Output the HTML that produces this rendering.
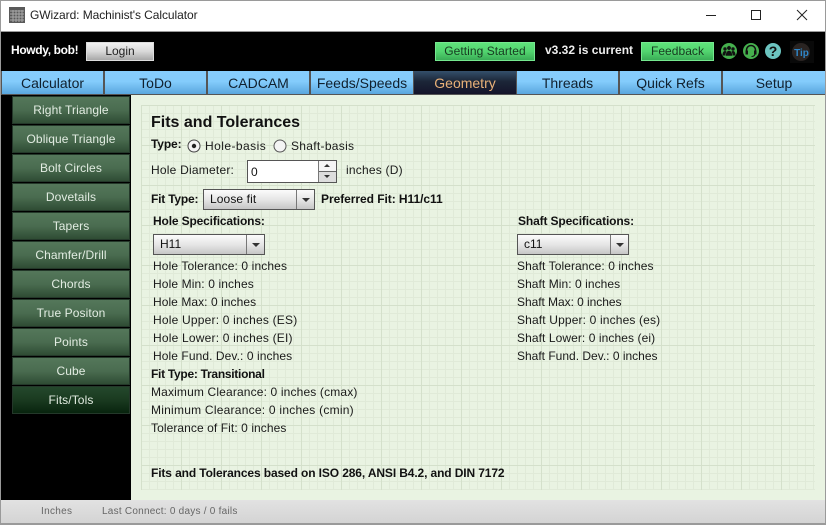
<!DOCTYPE html>
<html><head><meta charset="utf-8"><style>
*{box-sizing:border-box}
html,body{margin:0;padding:0;width:826px;height:525px;overflow:hidden;background:#fff;font-family:"Liberation Sans",sans-serif;font-size:12px;color:#111}
.a{position:absolute;white-space:nowrap}
.t{position:absolute;white-space:nowrap;line-height:14px;height:14px;color:#1a1a1a;letter-spacing:.12px}
.t.b{font-weight:bold;color:#111;letter-spacing:-.13px}
.tab{position:absolute;top:71px;height:23px;background:linear-gradient(#86cdfd,#84ccfc 45%,#5aa6de);color:#10202e;font-size:14px;line-height:24px;text-align:center}
.side{position:absolute;left:12px;width:118px;height:28px;background:linear-gradient(#54775a,#4a6c50 50%,#2f4c34);border:1px solid #24382a;color:#e2ece2;font-size:12px;line-height:27px;text-align:center;letter-spacing:.1px}
.sel{position:absolute;background:linear-gradient(#fbfbfb,#e6e6e6 50%,#c6c6c6);border:1px solid #555;height:21px;font-size:12px;line-height:19px;padding-left:6px}
.sel i{position:absolute;right:0;top:0;bottom:0;width:18px;border-left:1px solid #777}
.sel i:after{content:"";position:absolute;left:5px;top:8px;border:4px solid transparent;border-top:4px solid #333;border-bottom:0}
.btn{position:absolute;top:42px;height:19px;background:linear-gradient(#5fe37b,#52d46f 50%,#3aad56);border:1px solid #75e88f;color:#173a20;text-align:center;line-height:17px;font-size:12px;letter-spacing:.05px}
</style></head><body>
<div class="a" style="left:0;top:0;width:826px;height:525px;border:1px solid #9a9a9a;border-bottom:0;z-index:9;pointer-events:none"></div>
<svg class="a" style="left:9px;top:7px" width="16" height="16"><rect width="16" height="16" fill="#5a5a5a"/><path d="M1 4h14M1 7h14M1 10h14M1 13h14M4 3v12M7 3v12M10 3v12M13 3v12" stroke="#a9a9a9" stroke-width="1"/></svg>
<div class="a" style="left:30px;top:8px;font-size:12px;line-height:15px;color:#222;letter-spacing:-.07px">GWizard: Machinist's Calculator</div>
<svg class="a" style="left:700px;top:8px" width="110" height="15" fill="none" stroke="#222" stroke-width="1"><path d="M6 7.500h10"/><rect x="51.500" y="2.500" width="9" height="9"/><path d="M97 2l10 10M107 2l-10 10"/></svg>
<div class="a" style="left:1px;top:31px;width:824px;height:1px;background:#9a9a9a"></div>
<div class="a" style="left:1px;top:32px;width:824px;height:39px;background:#000"></div>
<div class="a" style="left:11px;top:43px;color:#fff;font-weight:bold;font-size:12px;line-height:14px;letter-spacing:-.35px">Howdy, bob!</div>
<div class="a" style="left:86px;top:42px;width:68px;height:19px;background:linear-gradient(#f0f0f0,#d8d8d8 50%,#a8a8a8);border:1px solid #ddd;color:#222;text-align:center;line-height:17px">Login</div>
<div class="btn" style="left:435px;width:100px">Getting Started</div>
<div class="a" style="left:545px;top:43px;color:#eee;font-weight:bold;line-height:14px">v3.32 is current</div>
<div class="btn" style="left:641px;width:73px">Feedback</div>
<svg class="a" style="left:720px;top:41px" width="95" height="22">
<circle cx="9" cy="10" r="8" fill="#46b04e"/><circle cx="5" cy="8" r="1.700" fill="#111"/><circle cx="13" cy="8" r="1.700" fill="#111"/><path d="M2.500 14.500c0-3 1-4.500 2.500-4.500s2.500 1.500 2.500 4.500zM10.500 14.500c0-3 1-4.500 2.500-4.500s2.500 1.500 2.500 4.500z" fill="#111"/><circle cx="9" cy="7" r="2.200" fill="#111" stroke="#46b04e" stroke-width=".5"/><path d="M5.500 15c0-3 1.500-5.500 3.500-5.500s3.500 2.500 3.500 5.500z" fill="#111" stroke="#46b04e" stroke-width=".5"/>
<circle cx="31" cy="10" r="8" fill="#46b04e"/><path d="M26.500 11v-2a4.500 4.500 0 0 1 9 0v2" stroke="#111" stroke-width="1.500" fill="none"/><rect x="25.500" y="9.500" width="2.500" height="4" fill="#111"/><rect x="34" y="9.500" width="2.500" height="4" fill="#111"/><path d="M35 13.500q-1 2-3.500 2" stroke="#111" fill="none"/>
<circle cx="53" cy="10" r="8" fill="#6cc4c0"/><text x="53" y="15" font-family="Liberation Sans" font-size="14" font-weight="bold" fill="#111" text-anchor="middle">?</text>
<rect x="70" y="0" width="24" height="22" fill="#090909"/><circle cx="81" cy="11" r="9" fill="#2a2422"/><text x="81.500" y="15" font-family="Liberation Sans" font-size="10" font-weight="bold" fill="#2f86c8" text-anchor="middle">Tip</text>
</svg>
<div class="a" style="left:1px;top:71px;width:824px;height:24px;background:#555"></div>
<div class="tab" style="left:2px;width:101px">Calculator</div>
<div class="tab" style="left:105px;width:101px">ToDo</div>
<div class="tab" style="left:208px;width:101px">CADCAM</div>
<div class="tab" style="left:311px;width:102px">Feeds/Speeds</div>
<div class="tab" style="left:414px;width:102px;background:linear-gradient(#34506c,#1c2638 45%,#14142a);color:#e8b078">Geometry</div>
<div class="tab" style="left:517px;width:101px">Threads</div>
<div class="tab" style="left:620px;width:101px">Quick Refs</div>
<div class="tab" style="left:723px;width:102px">Setup</div>
<div class="a" style="left:1px;top:95px;width:130px;height:405px;background:#000"></div>
<div class="a" style="left:131px;top:95px;width:694px;height:405px;background:#e9f3e2"></div>
<div class="side" style="top:96px">Right Triangle</div>
<div class="side" style="top:125px">Oblique Triangle</div>
<div class="side" style="top:154px">Bolt Circles</div>
<div class="side" style="top:183px">Dovetails</div>
<div class="side" style="top:212px">Tapers</div>
<div class="side" style="top:241px">Chamfer/Drill</div>
<div class="side" style="top:270px">Chords</div>
<div class="side" style="top:299px">True Positon</div>
<div class="side" style="top:328px">Points</div>
<div class="side" style="top:357px">Cube</div>
<div class="side" style="top:386px;background:linear-gradient(#24482c,#1a3a20 50%,#08240e)">Fits/Tols</div>
<div class="a" style="left:141px;top:105px;width:674px;height:385px;background-image:linear-gradient(90deg,#d4e0cb 1px,transparent 1px),linear-gradient(#d4e0cb 1px,transparent 1px),linear-gradient(90deg,#e0ead8 1px,transparent 1px),linear-gradient(#e0ead8 1px,transparent 1px);background-size:40px 40px,40px 40px,8px 8px,8px 8px"></div>
<div class="a" style="left:151px;top:114px;font-size:16px;line-height:18px;font-weight:bold;color:#111">Fits and Tolerances</div>
<div class="t b" style="left:151px;top:137px">Type:</div>
<svg class="a" style="left:187px;top:139px" width="100" height="14"><circle cx="7" cy="7" r="6" fill="#f4f4f4" stroke="#444"/><circle cx="7" cy="7" r="2.200" fill="#222"/><circle cx="93" cy="7" r="6" fill="#f4f4f4" stroke="#555"/></svg>
<div class="t" style="left:205px;top:139px;letter-spacing:.45px">Hole-basis</div>
<div class="t" style="left:291px;top:139px;letter-spacing:.3px">Shaft-basis</div>
<div class="t" style="left:151px;top:163px;letter-spacing:.22px">Hole Diameter:</div>
<div class="a" style="left:247px;top:160px;width:90px;height:23px;background:#fff;border:1px solid #555;line-height:22px;padding-left:3px">0<div style="position:absolute;right:0;top:0;width:18px;height:21px;border-left:1px solid #777;background:linear-gradient(#f4f4f4 48%,#666 48%,#666 52%,#ddd 52%)"><div style="position:absolute;left:5px;top:3px;border:3.500px solid transparent;border-bottom:3.500px solid #333;border-top:0"></div><div style="position:absolute;left:5px;top:14px;border:3.500px solid transparent;border-top:3.500px solid #333;border-bottom:0"></div></div></div>
<div class="t" style="left:346px;top:163px;letter-spacing:.22px">inches (D)</div>
<div class="t b" style="left:151px;top:192px;letter-spacing:-.2px">Fit Type:</div>
<div class="sel" style="left:203px;top:189px;width:112px;letter-spacing:.1px">Loose fit<i></i></div>
<div class="t b" style="left:321px;top:192px;letter-spacing:-.05px">Preferred Fit: H11/c11</div>
<div class="t b" style="left:153px;top:214px;letter-spacing:-.15px">Hole Specifications:</div>
<div class="sel" style="left:153px;top:234px;width:112px">H11<i></i></div>
<div class="t" style="left:153px;top:259px">Hole Tolerance: 0 inches</div>
<div class="t" style="left:153px;top:277px">Hole Min: 0 inches</div>
<div class="t" style="left:153px;top:295px;letter-spacing:.06px">Hole Max: 0 inches</div>
<div class="t" style="left:153px;top:313px;letter-spacing:.2px">Hole Upper: 0 inches (ES)</div>
<div class="t" style="left:153px;top:331px;letter-spacing:.2px">Hole Lower: 0 inches (EI)</div>
<div class="t" style="left:153px;top:349px;letter-spacing:.08px">Hole Fund. Dev.: 0 inches</div>
<div class="t b" style="left:518px;top:214px">Shaft Specifications:</div>
<div class="sel" style="left:517px;top:234px;width:112px">c11<i></i></div>
<div class="t" style="left:517px;top:259px;letter-spacing:.08px">Shaft Tolerance: 0 inches</div>
<div class="t" style="left:517px;top:277px;letter-spacing:.06px">Shaft Min: 0 inches</div>
<div class="t" style="left:517px;top:295px;letter-spacing:-.05px">Shaft Max: 0 inches</div>
<div class="t" style="left:517px;top:313px;letter-spacing:.15px">Shaft Upper: 0 inches (es)</div>
<div class="t" style="left:517px;top:331px;letter-spacing:.08px">Shaft Lower: 0 inches (ei)</div>
<div class="t" style="left:517px;top:349px;letter-spacing:0">Shaft Fund. Dev.: 0 inches</div>
<div class="t b" style="left:151px;top:367px;letter-spacing:-.28px">Fit Type: Transitional</div>
<div class="t" style="left:151px;top:385px;letter-spacing:.15px">Maximum Clearance: 0 inches (cmax)</div>
<div class="t" style="left:151px;top:403px;letter-spacing:.24px">Minimum Clearance: 0 inches (cmin)</div>
<div class="t" style="left:151px;top:421px;letter-spacing:.08px">Tolerance of Fit: 0 inches</div>
<div class="t b" style="left:151px;top:466px;letter-spacing:-.12px">Fits and Tolerances based on ISO 286, ANSI B4.2, and DIN 7172</div>
<div class="a" style="left:1px;top:500px;width:824px;height:25px;background:linear-gradient(#e2e2e2,#d4d4d4);border-bottom:2px solid #9a9a9a"></div>
<div class="a" style="left:41px;top:505px;font-size:10px;line-height:14px;color:#666;letter-spacing:.3px">Inches</div>
<div class="a" style="left:102px;top:505px;font-size:10px;line-height:14px;color:#666;letter-spacing:.24px">Last Connect: 0 days / 0 fails</div>
</body></html>
